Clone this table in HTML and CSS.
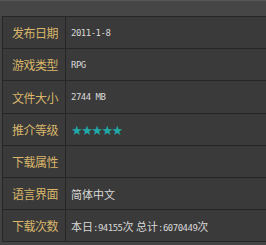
FILE: index.html
```html
<!DOCTYPE html>
<html lang="zh">
<head>
<meta charset="utf-8">
<link rel="stylesheet" href="styles.css">
</head>
<body>
<div class="topbar"></div>
<table class="info">
  <tr><th>发布日期</th><td class="mono">2011-1-8</td></tr>
  <tr><th>游戏类型</th><td class="mono">RPG</td></tr>
  <tr class="tall"><th>文件大小</th><td class="mono">2744 MB</td></tr>
  <tr><th>推介等级</th><td><span class="stars">★★★★★</span></td></tr>
  <tr><th>下载属性</th><td></td></tr>
  <tr><th>语言界面</th><td>简体中文</td></tr>
  <tr><th>下载次数</th><td>本日<span class="num">:94155</span>次 总计<span class="num">:6070449</span>次</td></tr>
</table>
<div class="bottom"></div>
</body>
</html>
```
FILE: styles.css
```css
html, body {
  margin: 0;
  padding: 0;
  background: #424242;
  overflow: hidden;
}
body {
  width: 266px;
  height: 245px;
  font-family: "Noto Sans CJK SC", "Noto Sans", sans-serif;
}
.topbar {
  height: 15px;
  border-top: 1px solid #575757;
  background: #464646;
}
.info {
  border-collapse: collapse;
  margin-left: 2px;
  width: 264px;
  background: #3a3a3a;
}
.info th, .info td {
  border: 1px solid #262626;
  height: 31px;
  padding: 0;
  vertical-align: middle;
  text-align: left;
}
.info td {
  border-right: none;
}
.info tr.tall th, .info tr.tall td {
  height: 32px;
}
.info th {
  width: 53px;
  padding-left: 9px;
  font-weight: normal;
  font-size: 12px;
  color: #d9b66a;
  letter-spacing: -0.5px;
}
.info td {
  padding-left: 5px;
  font-size: 11px;
  color: #d8d8d8;
}
.info td.mono, .num {
  font-family: "DejaVu Sans Mono", monospace;
  font-size: 9px;
  letter-spacing: -0.5px;
}
.num { color: #d8d8d8; }
.stars {
  color: #1fa9a9;
  font-size: 13px;
  letter-spacing: -1.5px;
  font-family: "DejaVu Sans", sans-serif;
}
.bottom {
  height: 4px;
  background: #444;
}
```
